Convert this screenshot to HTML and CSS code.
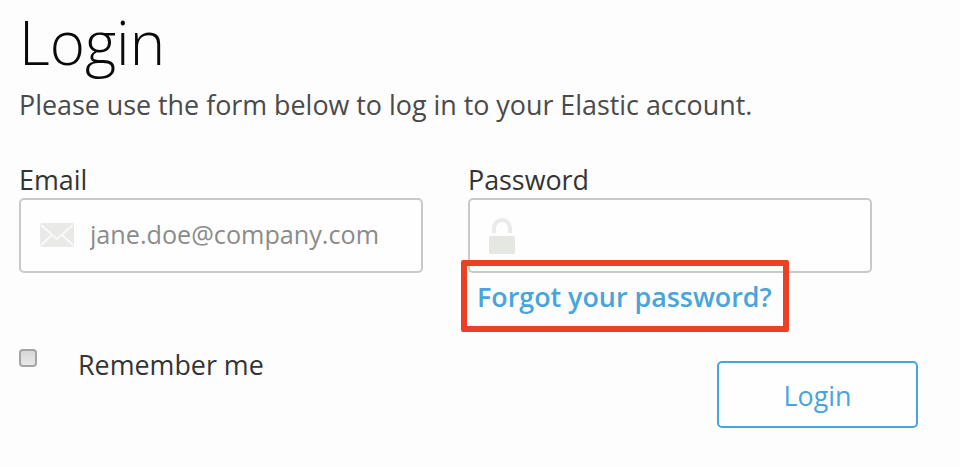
FILE: index.html
```html
<!DOCTYPE html>
<html lang="en">
<head>
<meta charset="utf-8">
<title>Login</title>
<link rel="stylesheet" href="styles.css">
</head>
<body>
<main class="login">
  <h1 class="title">Login</h1>
  <p class="intro">Please use the form below to log in to your Elastic account.</p>
  <form class="form">
    <div class="fields">
      <div class="field">
        <label class="label" for="email">Email</label>
        <div class="control">
          <svg class="mail" viewBox="0 0 34 24"><rect width="34" height="24" rx="2" fill="#e9e9e7"/><path d="M1 2l16 14L33 2M1 22l11-10M33 22L22 12" fill="none" stroke="#fafaf8" stroke-width="1.8"/></svg>
          <input class="input" id="email" type="email" placeholder="jane.doe@company.com">
        </div>
      </div>
      <div class="field">
        <label class="label" for="password">Password</label>
        <div class="control">
          <svg class="lock" viewBox="0 0 26 36"><path d="M5 15V10a8 8 0 0 1 16 0v5" fill="none" stroke="#e9ebe8" stroke-width="4"/><rect y="18" width="26" height="18" rx="1.5" fill="#e4e7e2"/></svg>
          <input class="input" id="password" type="password">
        </div>
        <div class="highlight"><a class="forgot" href="#">Forgot your password?</a></div>
      </div>
    </div>
    <div class="actions">
      <label class="remember"><input class="checkbox" type="checkbox"><span class="remember-text">Remember me</span></label>
      <button class="submit" type="button">Login</button>
    </div>
  </form>
</main>
</body>
</html>
```
FILE: styles.css
```css
* { box-sizing: border-box; }
body { margin: 0; background: #fdfdfd; color: #343434; font: 26.85px/36px "Open Sans", sans-serif; }
.login { padding: 2px 42px 0 19px; height: 467px; overflow: hidden; }
.title { margin: 0; font-size: 60px; line-height: 80px; font-weight: 300; color: #0a0a0a; }
.intro { margin: 5px 0 0; color: #4a4a4a; white-space: nowrap; }
.form { margin-top: 39px; }
.fields { display: flex; gap: 45px; }
.field { width: 404px; }
.label { display: block; }
.control { display: flex; align-items: center; height: 75px; border: 2px solid #c9c9c9; border-radius: 5px; padding-left: 19px; background: #fefefe; }
.mail { width: 34px; height: 24px; margin: 0 16px 2px 0; }
.lock { width: 26px; height: 36px; }
.input { flex: 1; min-width: 0; margin-bottom: 4px; padding: 0; border: 0; outline: 0; background: none; font: inherit; font-size: 25.2px; }
.input::placeholder { color: #8b8b8b; opacity: 1; }
.highlight { position: relative; width: 328px; height: 72px; margin: -13px 0 0 -7px; border: 6px solid #eb4024; border-radius: 2px; padding: 13px 0 0 10px; }
.forgot { color: #48a5dc; font-weight: 600; text-decoration: none; white-space: nowrap; }
.actions { display: flex; justify-content: space-between; margin-top: 14px; }
.remember { display: flex; }
.remember-text { padding-top: 1px; }
.checkbox { appearance: none; width: 18px; height: 18px; margin: 3px 41px 0 0; border: 2px solid #a4a4a4; border-radius: 4px; background: linear-gradient(#d8d8d8, #e8e8e8); }
.submit { width: 201px; height: 67px; margin: 15px 0 0; padding: 2px 0 0; border: 2px solid #48a5dc; border-radius: 5px; background: #fefefe; color: #48a5dc; font: inherit; }
```
